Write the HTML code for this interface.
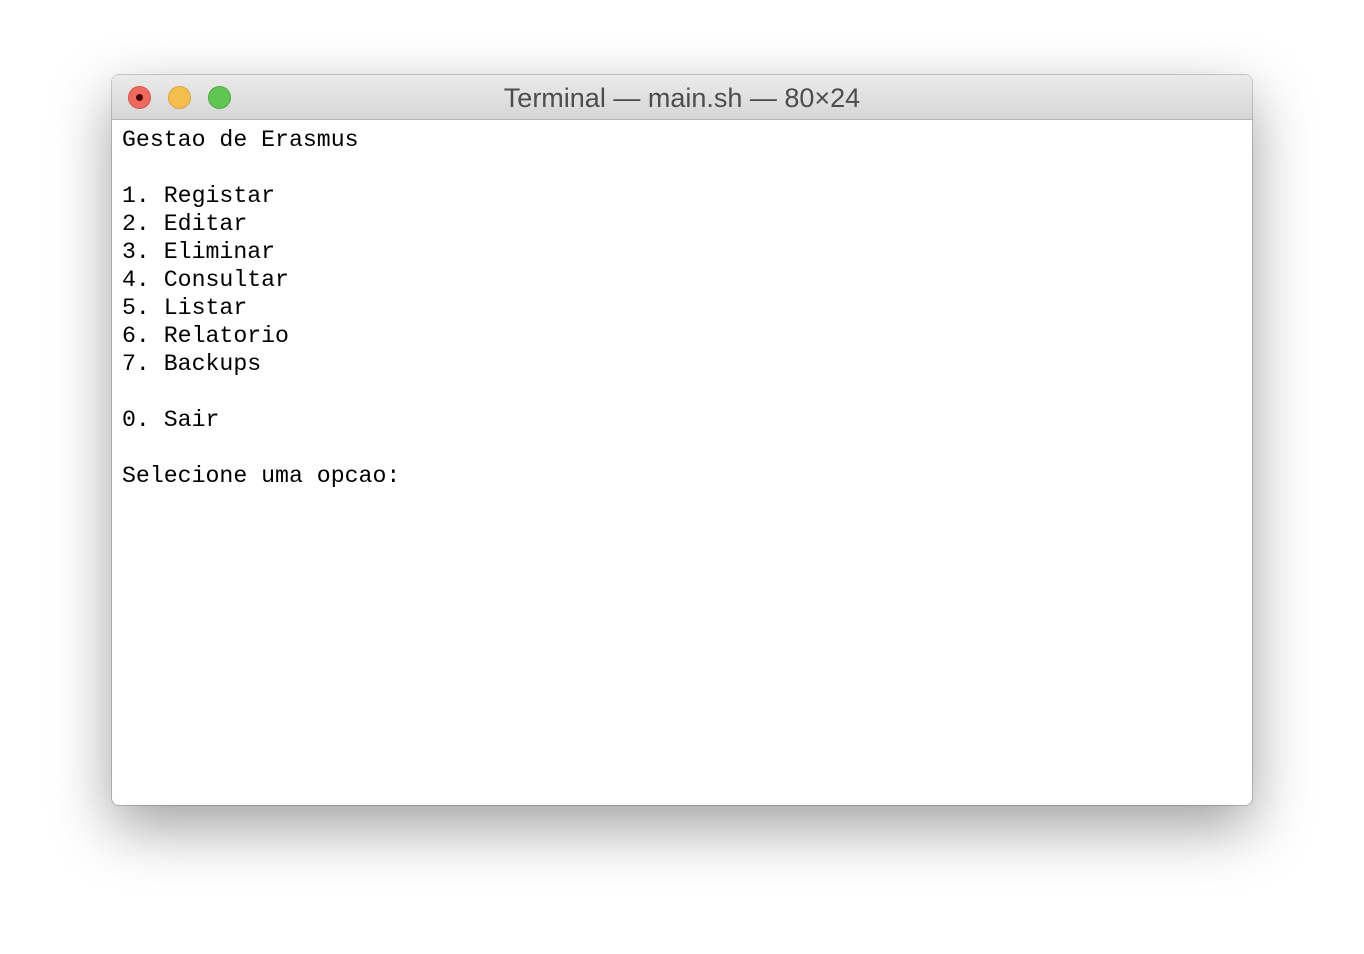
<!DOCTYPE html>
<html><head><style>
body{margin:0;width:1364px;height:954px;background:#fff;position:relative;overflow:hidden}
.win{position:absolute;left:112px;top:75px;width:1140px;height:730px;border-radius:7px;background:#fff;box-shadow:0 22px 60px rgba(0,0,0,0.38),0 0 0 1px rgba(0,0,0,0.18);overflow:hidden}
.bar{height:44px;background:linear-gradient(#ebebeb,#d6d6d6);border-bottom:1px solid #b5b5b5;position:relative}
.dot{position:absolute;top:11px;width:23px;height:23px;border-radius:50%;box-sizing:border-box}
.title{position:absolute;left:0;right:0;top:8px;text-align:center;font:27px "Liberation Sans",sans-serif;color:#4d4d4d}
pre{margin:0;position:absolute;left:10px;top:51px;font:23.2px/28px "Liberation Mono",monospace;color:#000}
</style></head><body>
<div class="win">
<div class="bar">
<div class="dot" style="left:16px;background:#ee6a5f;border:1px solid #d5544a"><div style="position:absolute;left:7px;top:7px;width:7px;height:7px;border-radius:50%;background:#4d0000"></div></div>
<div class="dot" style="left:56px;background:#f5bf4f;border:1px solid #d9a53b"></div>
<div class="dot" style="left:96px;background:#61c554;border:1px solid #4ea943"></div>
<div class="title">Terminal — main.sh — 80×24</div>
</div>
<pre>Gestao de Erasmus

1. Registar
2. Editar
3. Eliminar
4. Consultar
5. Listar
6. Relatorio
7. Backups

0. Sair

Selecione uma opcao:</pre>
</div>
</body></html>
